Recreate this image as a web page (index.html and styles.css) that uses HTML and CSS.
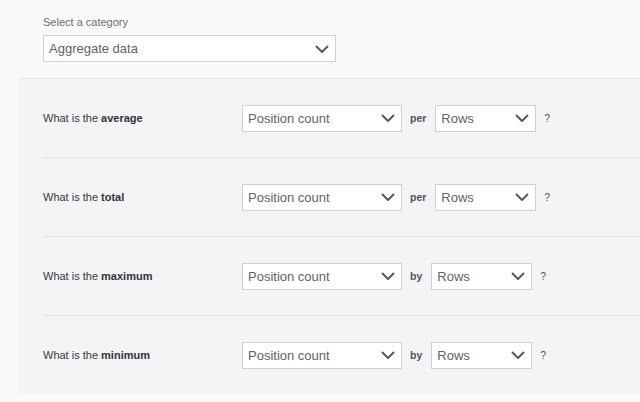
FILE: index.html
```html
<!DOCTYPE html>
<html>
<head>
<meta charset="utf-8">
<link rel="stylesheet" href="styles.css">
</head>
<body>
<div class="top">
  <div class="cat-label">Select a category</div>
  <div class="select select-cat"><span>Aggregate data</span><svg class="chev" viewBox="0 0 14 8"><path d="M1 1 L7 7 L13 1"/></svg></div>
</div>
<div class="panel">
  <div class="row">
    <div class="q">What is the <b>average</b></div>
    <div class="select select-a"><span>Position count</span><svg class="chev" viewBox="0 0 14 8"><path d="M1 1 L7 7 L13 1"/></svg></div>
    <div class="conj">per</div>
    <div class="select select-b"><span>Rows</span><svg class="chev" viewBox="0 0 14 8"><path d="M1 1 L7 7 L13 1"/></svg></div>
    <div class="qm">?</div>
  </div>
  <div class="row">
    <div class="q">What is the <b>total</b></div>
    <div class="select select-a"><span>Position count</span><svg class="chev" viewBox="0 0 14 8"><path d="M1 1 L7 7 L13 1"/></svg></div>
    <div class="conj">per</div>
    <div class="select select-b"><span>Rows</span><svg class="chev" viewBox="0 0 14 8"><path d="M1 1 L7 7 L13 1"/></svg></div>
    <div class="qm">?</div>
  </div>
  <div class="row">
    <div class="q">What is the <b>maximum</b></div>
    <div class="select select-a"><span>Position count</span><svg class="chev" viewBox="0 0 14 8"><path d="M1 1 L7 7 L13 1"/></svg></div>
    <div class="conj">by</div>
    <div class="select select-b"><span>Rows</span><svg class="chev" viewBox="0 0 14 8"><path d="M1 1 L7 7 L13 1"/></svg></div>
    <div class="qm">?</div>
  </div>
  <div class="row">
    <div class="q">What is the <b>minimum</b></div>
    <div class="select select-a"><span>Position count</span><svg class="chev" viewBox="0 0 14 8"><path d="M1 1 L7 7 L13 1"/></svg></div>
    <div class="conj">by</div>
    <div class="select select-b"><span>Rows</span><svg class="chev" viewBox="0 0 14 8"><path d="M1 1 L7 7 L13 1"/></svg></div>
    <div class="qm">?</div>
  </div>
</div>
</body>
</html>
```
FILE: styles.css
```css
html, body {
  margin: 0;
  padding: 0;
}
body {
  width: 640px;
  height: 402px;
  overflow: hidden;
  background: #f9f9f9;
  font-family: "Liberation Sans", Arial, sans-serif;
  color: #3c3f44;
}
.top {
  padding: 15px 0 0 43px;
}
.cat-label {
  font-size: 11px;
  line-height: 14px;
  color: #6a6d72;
  margin-bottom: 6px;
}
.select {
  box-sizing: border-box;
  height: 27px;
  background: #fff;
  border: 1px solid #cfd0d3;
  display: flex;
  align-items: center;
  justify-content: space-between;
  padding: 0 6px 0 5px;
  font-size: 13px;
  color: #606368;
}
.select-cat {
  width: 293px;
}
.select-a {
  width: 160px;
}
.select-b {
  width: 101px;
}
.chev {
  width: 14px;
  height: 8px;
  fill: none;
  stroke: #55585d;
  stroke-width: 2;
}
.panel {
  margin: 16px 0 0 18px;
  padding-left: 25px;
  background: #f4f4f6;
  border-top: 1px solid #e6e6e8;
}
.row {
  height: 78px;
  display: flex;
  align-items: center;
  border-bottom: 1px solid #e3e3e6;
}
.row:last-child {
  border-bottom: none;
}
.q {
  width: 199px;
  font-size: 11px;
  color: #35383d;
}
.q b {
  font-weight: 700;
  color: #30333a;
}
.conj {
  font-size: 10.5px;
  font-weight: 700;
  color: #50535a;
  margin: 0 9px 0 8px;
}
.qm {
  font-size: 10.5px;
  color: #50535a;
  margin-left: 8px;
}
```
